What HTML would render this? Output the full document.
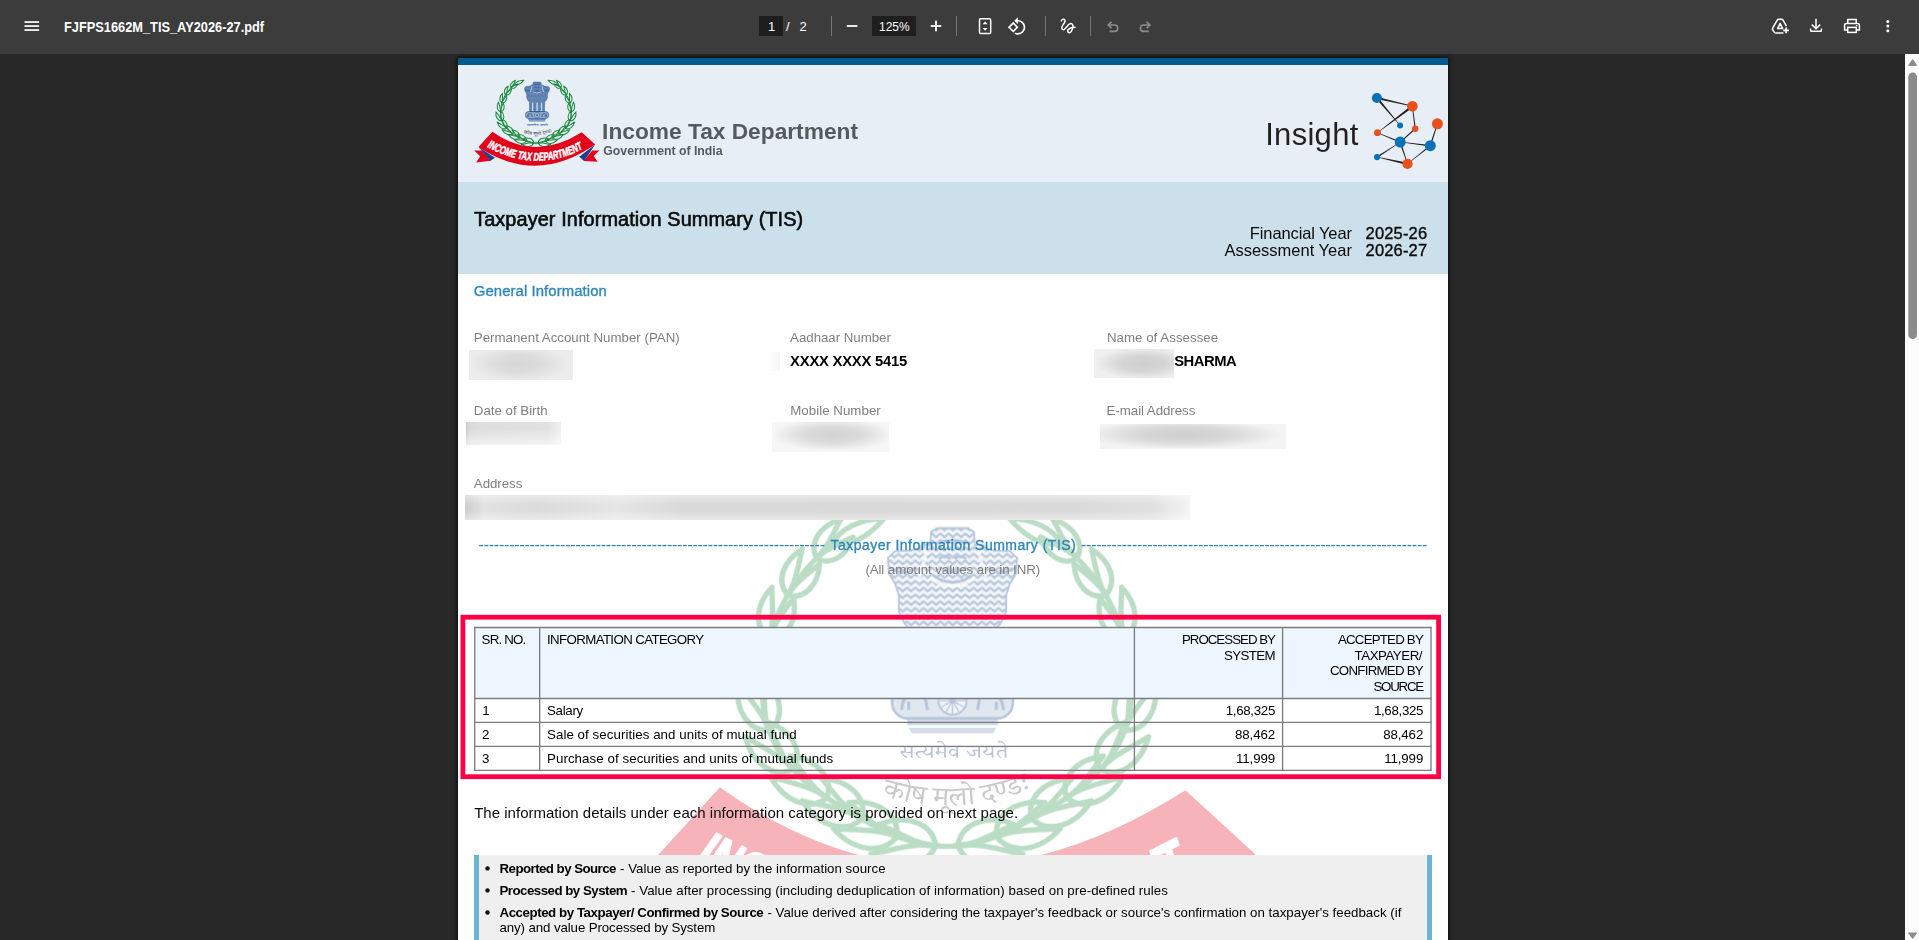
<!DOCTYPE html>
<html lang="en">
<head>
<meta charset="utf-8">
<title>FJFPS1662M_TIS_AY2026-27.pdf</title>
<style>
*{box-sizing:border-box;margin:0;padding:0}
html,body{width:1919px;height:940px;overflow:hidden;background:#282828;font-family:"Liberation Sans",sans-serif;}
body{position:relative}
.abs{position:absolute}
.t{position:absolute;white-space:nowrap;line-height:1;transform-origin:0 0}
#toolbar{position:absolute;left:0;top:0;width:1919px;height:54px;background:#3c3c3c;z-index:5;color:#fff}
#page{position:absolute;left:458px;top:58px;width:990px;height:882px;background:#fff;overflow:hidden}
#pshadow{position:absolute;left:458px;top:58px;width:990px;height:900px;box-shadow:0 0 4px 1px rgba(0,0,0,.75)}
#sb{position:absolute;left:1905px;top:54px;width:14px;height:886px;background:#fcfcfc;z-index:4}
.m{-webkit-text-stroke:.35px currentColor}
.b{font-weight:bold}
.g{color:#808080}
.bl{color:#2f87b7}
</style>
</head>
<body>
<div id="toolbar">
<svg class="abs" style="left:0;top:0" width="1919" height="54" viewBox="0 0 1919 54">
<!-- hamburger -->
<g fill="#fff"><rect x="24.5" y="21.2" width="14.6" height="1.7"/><rect x="24.5" y="25.2" width="14.6" height="1.7"/><rect x="24.5" y="29.2" width="14.6" height="1.7"/></g>
<!-- page / zoom boxes -->
<rect x="759" y="16" width="24" height="20" fill="#1e1e1e"/>
<rect x="872" y="16" width="44" height="20" fill="#1e1e1e"/>
<!-- separators -->
<g fill="#757575"><rect x="831" y="16" width="1" height="20"/><rect x="956" y="16" width="1" height="20"/><rect x="1045" y="16" width="1" height="20"/><rect x="1090" y="16" width="1" height="20"/></g>
<!-- minus / plus -->
<rect x="846.8" y="25.1" width="10.6" height="1.8" fill="#fff"/>
<rect x="930.7" y="25.1" width="10.6" height="1.8" fill="#fff"/><rect x="935.1" y="20.7" width="1.8" height="10.6" fill="#fff"/>
<!-- fit to page -->
<rect x="979.5" y="18.7" width="11.2" height="14.8" rx="1.2" fill="none" stroke="#fff" stroke-width="1.5"/>
<path d="M982.6 24.2 L985.1 21.4 L987.6 24.2 Z M982.6 28 L985.1 30.8 L987.6 28 Z" fill="#fff"/>
<!-- rotate ccw -->
<g transform="translate(1007.2 16.6) scale(0.82)" fill="#fff"><path d="M7.34 6.41L.86 12.9l6.49 6.48 6.49-6.48-6.5-6.49zM3.69 12.9l3.66-3.66L11 12.9l-3.66 3.66-3.65-3.66zm15.67-6.26C17.61 4.88 15.3 4 13 4V.76L8.76 5 13 9.24V6c1.79 0 3.58.68 4.95 2.05 2.73 2.73 2.73 7.17 0 9.9C16.58 19.32 14.79 20 13 20c-.97 0-1.94-.21-2.84-.61l-1.49 1.49C10.02 21.62 11.51 22 13 22c2.3 0 4.61-.88 6.36-2.64 3.52-3.51 3.52-9.21 0-12.72z"/></g>
<!-- draw -->
<path d="M1061.2,20.9 C1061.8,19.2 1064.6,18.5 1065.1,20.6 C1065.6,22.6 1061.6,25.6 1061.8,27.6 C1062,29.9 1063.6,30.1 1064.6,29.2 C1066.4,27.8 1068.4,23.8 1070.4,23.6 C1072.6,23.4 1073.4,25.6 1072.8,27.6 C1072.2,29.8 1071,32.6 1069.4,32.7 C1067.6,32.8 1067.2,30.6 1068.4,29.4 C1069.8,28 1072.4,27.2 1075,27.2" fill="none" stroke="#fff" stroke-width="1.5" stroke-linecap="round" stroke-linejoin="round"/>
<!-- undo / redo -->
<g fill="none" stroke="#8c8c8c" stroke-width="1.6" stroke-linejoin="miter">
<path d="M1111.6 21.8 L1108.2 25 L1111.6 28.2 M1108.4 25 H1114.6 A3.2 3.2 0 0 1 1114.6 31.4 H1109.4"/>
<path d="M1146.6 21.8 L1150 25 L1146.6 28.2 M1149.8 25 H1143.6 A3.2 3.2 0 0 0 1143.6 31.4 H1148.8"/>
</g>
<!-- drive add -->
<g fill="none" stroke="#fff" stroke-width="1.5" stroke-linejoin="round">
<path d="M1786.4 26.2 L1783.2 20.4 Q1782.6 19.3 1781.4 19.3 H1778.9 Q1777.7 19.3 1777.1 20.4 L1772.8 27.8 Q1772.2 28.9 1772.8 29.9 L1774 32 Q1774.6 33 1775.8 33 H1783.4"/>
<path d="M1780.1 23.4 L1782.6 28.6 H1777.6 Z"/>
</g>
<path d="M1786.1 27.4 V33.2 M1783.2 30.3 H1789" stroke="#fff" stroke-width="1.7" fill="none"/>
<!-- download -->
<path d="M1816 18.8 V28.6 M1811.8 24.6 L1816 28.8 L1820.2 24.6 M1810.6 28.6 V30.4 Q1810.6 31.3 1811.5 31.3 H1820.5 Q1821.4 31.3 1821.4 30.4 V28.6" fill="none" stroke="#fff" stroke-width="1.5"/>
<!-- print -->
<g fill="none" stroke="#fff" stroke-width="1.5">
<path d="M1847.8 23.2 V19.5 H1856.2 V23.2"/>
<path d="M1847.6 30 H1844.6 V25.2 Q1844.6 23.4 1846.4 23.4 H1857.6 Q1859.4 23.4 1859.4 25.2 V30 H1856.4"/>
<rect x="1847.7" y="27.4" width="8.6" height="5" />
</g>
<circle cx="1856.6" cy="25.8" r="0.8" fill="#fff"/>
<!-- more -->
<g fill="#fff"><circle cx="1887.8" cy="21.4" r="1.5"/><circle cx="1887.8" cy="26" r="1.5"/><circle cx="1887.8" cy="30.7" r="1.5"/></g>
</svg>
<div class="t" id="ttl" style="left:64px;top:20px;font-size:14px;font-weight:bold;transform:scaleX(.914)">FJFPS1662M_TIS_AY2026-27.pdf</div>
<div class="t" id="pg1" style="left:768px;top:20px;font-size:13px">1</div>
<div class="t" id="pgs" style="left:786px;top:20px;font-size:13px">/</div>
<div class="t" id="pg2" style="left:799.5px;top:20px;font-size:13px">2</div>
<div class="t" id="zm" style="left:878.5px;top:20px;font-size:13px;transform:scaleX(.92)">125%</div>

</div>
<div id="pshadow"></div>
<div id="page">
<div class="abs" style="left:0;top:0;width:990px;height:7px;background:#005b8c"></div>
<div class="abs" style="left:0;top:7px;width:990px;height:117px;background:#e7eef6"></div>
<div class="abs" style="left:0;top:124px;width:990px;height:92px;background:#cce0eb"></div>
<svg class="abs" style="left:0;top:0" width="990" height="882" viewBox="0 0 990 882">
<defs>
<g id="itd">
<g transform="translate(-0.35,1.5)"><g id="br" fill="none" stroke="#1d8b3f" stroke-width="1.02" stroke-linejoin="round">
<path d="M5.28,29.94 L3.70,30.13 L2.11,30.24 L0.53,30.26 L-1.05,30.20 L-2.63,30.06 L-4.19,29.84 L-5.74,29.53 L-7.27,29.15 L-8.77,28.68 L-10.24,28.14 L-11.68,27.53 L-13.09,26.84 L-14.45,26.08 L-15.80,25.29 L-17.16,24.50 L-18.52,23.71 L-19.90,22.89 L-21.29,22.05 L-22.69,21.16 L-24.08,20.21 L-25.47,19.19 L-26.83,18.10 L-28.15,16.91 L-29.41,15.64 L-30.60,14.27 L-31.69,12.80 L-32.67,11.25 L-33.51,9.61 L-34.21,7.90 L-34.75,6.13 L-35.12,4.31 L-35.31,2.47 L-35.39,0.62 L-35.38,-1.24 L-35.27,-3.09 L-35.06,-4.93 L-34.75,-6.75 L-34.35,-8.56 L-33.85,-10.35 L-33.27,-12.11 L-32.59,-13.83 L-31.82,-15.52 L-30.96,-17.16 L-30.02,-18.76 L-29.00,-20.30 L-27.90,-21.79 L-26.72,-23.22 L-25.46,-24.59 L-24.14,-25.89 L-22.75,-27.12 L-21.30,-28.27" fill="none" stroke-width="1.0"/>
<path transform="translate(-2.11,30.12) rotate(172.6)" d="M0,0 C2.27,-3.82 7.81,-4.08 12.60,0 C9.07,0.13 3.78,1.15 0,0Z"/>
<path transform="translate(-2.11,30.12) rotate(-159.4)" d="M0,0 C2.09,3.68 7.19,3.92 11.60,0 C8.35,-0.12 3.48,-1.10 0,0Z"/>
<path transform="translate(-9.54,28.41) rotate(-172.8)" d="M0,0 C2.22,-3.74 7.64,-3.99 12.33,0 C8.88,0.12 3.70,1.12 0,0Z"/>
<path transform="translate(-9.54,28.41) rotate(-144.8)" d="M0,0 C2.04,3.60 7.04,3.84 11.35,0 C8.17,-0.12 3.41,-1.08 0,0Z"/>
<path transform="translate(-16.30,25.00) rotate(-163.0)" d="M0,0 C2.16,-3.64 7.43,-3.88 11.98,0 C8.62,0.12 3.59,1.09 0,0Z"/>
<path transform="translate(-16.30,25.00) rotate(-135.0)" d="M0,0 C1.98,3.49 6.84,3.73 11.03,0 C7.94,-0.12 3.31,-1.05 0,0Z"/>
<path transform="translate(-23.00,20.95) rotate(-159.3)" d="M0,0 C2.09,-3.52 7.18,-3.75 11.59,0 C8.34,0.12 3.48,1.06 0,0Z"/>
<path transform="translate(-23.00,20.95) rotate(-131.3)" d="M0,0 C1.92,3.38 6.61,3.61 10.67,0 C7.68,-0.11 3.20,-1.01 0,0Z"/>
<path transform="translate(-29.50,15.54) rotate(-145.6)" d="M0,0 C2.01,-3.39 6.93,-3.62 11.17,0 C8.04,0.11 3.35,1.02 0,0Z"/>
<path transform="translate(-29.50,15.54) rotate(-117.6)" d="M0,0 C1.85,3.26 6.38,3.48 10.28,0 C7.41,-0.11 3.09,-0.98 0,0Z"/>
<path transform="translate(-34.17,8.03) rotate(-123.0)" d="M0,0 C1.93,-3.26 6.65,-3.48 10.73,0 C7.73,0.11 3.22,0.98 0,0Z"/>
<path transform="translate(-34.17,8.03) rotate(-95.0)" d="M0,0 C1.78,3.13 6.13,3.34 9.88,0 C7.11,-0.10 2.96,-0.94 0,0Z"/>
<path transform="translate(-35.39,-0.82) rotate(-101.7)" d="M0,0 C1.85,-3.12 6.37,-3.33 10.28,0 C7.40,0.10 3.08,0.94 0,0Z"/>
<path transform="translate(-35.39,-0.82) rotate(-73.7)" d="M0,0 C1.70,3.00 5.87,3.20 9.46,0 C6.81,-0.10 2.84,-0.90 0,0Z"/>
<path transform="translate(-34.05,-9.69) rotate(-87.1)" d="M0,0 C1.76,-2.98 6.08,-3.17 9.80,0 C7.06,0.10 2.94,0.89 0,0Z"/>
<path transform="translate(-34.05,-9.69) rotate(-59.1)" d="M0,0 C1.62,2.86 5.60,3.05 9.03,0 C6.50,-0.10 2.71,-0.86 0,0Z"/>
<path transform="translate(-30.52,-17.94) rotate(-72.6)" d="M0,0 C1.68,-2.83 5.78,-3.02 9.32,0 C6.71,0.09 2.80,0.85 0,0Z"/>
<path transform="translate(-30.52,-17.94) rotate(-44.6)" d="M0,0 C1.54,2.72 5.32,2.90 8.58,0 C6.18,-0.09 2.57,-0.82 0,0Z"/>
<path transform="translate(-25.03,-25.03) rotate(-58.0)" d="M0,0 C1.59,-2.68 5.47,-2.86 8.82,0 C6.35,0.09 2.65,0.80 0,0Z"/>
<path transform="translate(-25.03,-25.03) rotate(-30.0)" d="M0,0 C1.46,2.57 5.03,2.74 8.12,0 C5.85,-0.09 2.44,-0.77 0,0Z"/>
<path transform="translate(-21.79,-27.90) rotate(-26.0)" d="M0,0 C2.38,-2.00 6.70,-1.90 10.80,0 C6.70,1.90 2.38,2.00 0,0Z"/>
</g></g>
<g transform="translate(-0.35,1.5) scale(-1,1)"><use href="#br"/></g>
<pattern id="fur" width="1.6" height="1.3" patternUnits="userSpaceOnUse"><path d="M-0.1,0.25 L0.8,1.0 L1.7,0.25" fill="none" stroke="#0f4186" stroke-width="0.44"/></pattern>
<path d="M3.75,-29.30 L4.85,-28.60 L5.05,-26.00 L6.35,-26.20 L7.65,-25.20 L9.35,-25.00 L11.75,-24.90 L13.15,-23.60 L12.95,-20.60 L11.75,-18.60 L11.05,-16.50 L11.05,-13.30 L9.95,-11.00 L8.35,-9.20 L8.15,0.30 L-6.65,0.30 L-6.85,-9.20 L-8.45,-11.00 L-9.55,-13.30 L-9.55,-16.50 L-10.25,-18.60 L-11.45,-20.60 L-11.65,-23.60 L-10.25,-24.90 L-7.85,-25.00 L-6.15,-25.20 L-4.85,-26.20 L-3.55,-26.00 L-3.35,-28.60 L-2.25,-29.30Z" fill="#0f4186" style="opacity:var(--eo,.5)"/>
<path d="M3.75,-29.30 L4.85,-28.60 L5.05,-26.00 L6.35,-26.20 L7.65,-25.20 L9.35,-25.00 L11.75,-24.90 L13.15,-23.60 L12.95,-20.60 L11.75,-18.60 L11.05,-16.50 L11.05,-13.30 L9.95,-11.00 L8.35,-9.20 L8.15,0.30 L-6.65,0.30 L-6.85,-9.20 L-8.45,-11.00 L-9.55,-13.30 L-9.55,-16.50 L-10.25,-18.60 L-11.45,-20.60 L-11.65,-23.60 L-10.25,-24.90 L-7.85,-25.00 L-6.15,-25.20 L-4.85,-26.20 L-3.55,-26.00 L-3.35,-28.60 L-2.25,-29.30Z" fill="url(#fur)" stroke="#0f4186" stroke-width=".35" stroke-linejoin="round"/>
<g fill="none" stroke="#0f4186" stroke-width=".5">
<path d="M-2.85,-20.2 Q0.75,-17.6 4.35,-20.2 M-2.25,-26.4 Q0.75,-27.6 3.75,-26.4 M-1.85,-23.4 q1.1,-1 2.2,0 M1.15,-23.4 q1.1,-1 2.2,0 M-1.05,-21.4 Q0.75,-20.4 2.55,-21.4"/>
<path d="M-10.85,-21.6 q2.2,1.6 4.4,0 M7.95,-21.6 q2.2,1.6 4.4,0"/>
</g>
<path d="M-4.25,-25.4 Q-4.65,-22.5 -5.85,-19.2 M5.75,-25.4 Q6.15,-22.5 7.35,-19.2 M-3.45,-19.6 Q0.75,-17 4.95,-19.6" fill="none" stroke="#fff" stroke-width=".7" opacity=".7"/>
<g fill="#e7eef6" opacity=".8"><rect x="-4.35" y="-8.6" width="1.3" height="8.6"/><rect x="0.10" y="-8.6" width="1.3" height="8.6"/><rect x="4.55" y="-8.6" width="1.3" height="8.6"/></g>
<rect x="-10.85" y="0.2" width="23.2" height="7.0" rx="3" fill="#0f4186" opacity=".42"/>
<rect x="-10.85" y="0.2" width="23.2" height="7.0" rx="3" fill="none" stroke="#0f4186" stroke-width=".5"/>
<circle cx="0.75" cy="3.8" r="2.7" fill="#fff" opacity=".55"/>
<g fill="none" stroke="#0f4186" stroke-width=".38"><circle cx="0.75" cy="3.8" r="2.7"/><path d="M0.75,3.8 L3.25,3.80 M0.75,3.8 L2.92,5.05 M0.75,3.8 L2.00,5.97 M0.75,3.8 L0.75,6.30 M0.75,3.8 L-0.50,5.97 M0.75,3.8 L-1.42,5.05 M0.75,3.8 L-1.75,3.80 M0.75,3.8 L-1.42,2.55 M0.75,3.8 L-0.50,1.63 M0.75,3.8 L0.75,1.30 M0.75,3.8 L2.00,1.63 M0.75,3.8 L2.92,2.55 " stroke-width=".25"/>
<path d="M-9.05,5.6 q0.4,-3 2,-3.2 q2,-0.4 2.6,1 l0.4,2.2 M-7.65,5.6 v-1.6 M5.55,5.6 l0.4,-2.2 q0.6,-1.4 2.6,-1 q1.6,0.2 2,3.2 M9.15,5.6 v-1.6" stroke-width=".6"/></g>
<rect x="-7.95" y="7.5" width="17.4" height="1.0" fill="#0f4186" opacity=".75"/>
<path d="M-7.65,9.0 h16.8 l-0.6,1.1 h-15.6z" fill="#0f4186" opacity=".6"/>
<text x="0.98" y="14.76" font-family='"Liberation Serif","Noto Serif Devanagari","Noto Sans Devanagari","Lohit Devanagari",serif' font-size="3.7" fill="#0f4186" text-anchor="middle" textLength="21" lengthAdjust="spacingAndGlyphs">सत्यमेव जयते</text>
<path id="mot" d="M-12.8,22.0 Q1.4,26.6 15.7,20.8" fill="none"/>
<text font-family='"Liberation Serif","Noto Serif Devanagari","Noto Sans Devanagari","Lohit Devanagari",serif' font-size="5.2" fill="#4d4d4d"><textPath href="#mot" textLength="29.2" lengthAdjust="spacingAndGlyphs">कोष मूलो दण्डः</textPath></text>
<path d="M-62.10,39.32 L-54.51,39.32 L-45.35,49.37 L-60.09,51.16 L-56.18,44.90Z" fill="#e2001a"/>
<path d="M63.11,39.09 L55.85,39.09 L47.36,49.70 L61.32,50.49 L57.41,44.68Z" fill="#e2001a"/>
<path d="M-57.86,35.74 L-41.33,46.46 L-45.79,49.48Z" fill="#1f3f8f"/>
<path d="M58.86,33.28 L42.89,45.35 L47.81,49.82Z" fill="#1f3f8f"/>
<path d="M-43.90,20.44 Q-1.45,50.77 45.46,21.00 L58.86,33.28 Q-0.06,74.28 -57.86,35.74Z" fill="#e2001a"/>
<path id="rbt" d="M-49.26,35.74 Q0.22,62.55 47.47,37.08" fill="none"/>
<text font-family='"Liberation Sans",sans-serif' font-weight="bold" font-style="italic" font-size="11.4" fill="#fff" stroke="#fff" stroke-width=".5" stroke-linejoin="round"><textPath href="#rbt" textLength="100.5" lengthAdjust="spacingAndGlyphs">INCOME TAX DEPARTMENT</textPath></text>
</g>
</defs>
<use href="#itd" transform="translate(78.30,53.30)"/>
<use href="#itd" transform="translate(490.60,622.80) scale(5.21)" opacity="0.3" style="--eo:.14"/>
<g fill="#231f20"><polygon points="918.65,41.07 954.31,48.59 954.49,47.81 919.15,38.93"/><polygon points="918.06,40.71 941.91,67.56 942.29,67.24 919.74,39.29"/><polygon points="953.67,47.24 919.38,74.54 919.62,74.86 955.13,49.16"/><polygon points="954.00,48.25 956.60,70.87 957.80,70.73 954.80,48.15"/><polygon points="956.77,70.31 941.90,83.76 942.50,84.44 957.63,71.29"/><polygon points="919.39,74.98 941.93,84.75 942.47,83.45 919.61,74.42"/><polygon points="942.17,84.35 972.22,88.40 972.38,87.00 942.23,83.85"/><polygon points="919.54,99.77 942.31,84.27 942.09,83.93 918.66,98.43"/><polygon points="941.49,84.34 949.22,106.00 949.78,105.80 942.91,83.86"/><polygon points="919.05,99.34 949.24,107.07 949.76,104.73 919.15,98.86"/><polygon points="971.86,87.15 949.38,105.74 949.62,106.06 972.74,88.25"/><polygon points="978.97,65.66 971.68,87.50 972.92,87.90 979.83,65.94"/></g><circle cx="918.90" cy="40.00" r="5.0" fill="#0771b8"/><circle cx="954.40" cy="48.20" r="5.3" fill="#e9501b"/><circle cx="979.40" cy="65.80" r="5.5" fill="#e9501b"/><circle cx="942.10" cy="67.40" r="3.0" fill="#0771b8"/><circle cx="957.20" cy="70.80" r="3.2" fill="#e9501b"/><circle cx="919.50" cy="74.70" r="3.4" fill="#e9501b"/><circle cx="942.20" cy="84.10" r="5.5" fill="#0771b8"/><circle cx="972.30" cy="87.70" r="5.5" fill="#0771b8"/><circle cx="919.10" cy="99.10" r="3.1" fill="#0771b8"/><circle cx="949.50" cy="105.90" r="5.1" fill="#e9501b"/>
</svg>
<div class="abs" style="left:11.2px;top:292.3px;width:103.7px;height:29.3px;background:radial-gradient(ellipse 48% 60% at 48% 45%,#d6d6d6 0%,#dcdcdc 45%,#ececec 100%)"></div>
<div class="abs" style="left:309.4px;top:294px;width:12.6px;height:19px;background:linear-gradient(90deg,#fff,#f6f6f6)"></div>
<div class="abs" style="left:636.2px;top:291.3px;width:79.7px;height:28.5px;background:radial-gradient(ellipse 60% 55% at 62% 50%,#cfcfcf 0%,#d4d4d4 45%,#efefef 100%)"></div>
<div class="abs" style="left:8px;top:364.1px;width:94.9px;height:23.3px;background:linear-gradient(180deg,rgba(255,255,255,0) 35%,rgba(255,255,255,.6) 100%),linear-gradient(90deg,#c6c6c6 0,#d9d9d9 3%,#dedede 14%,#e0e0e0 50%,#e1e1e1 85%,#efefef 100%)"></div>
<div class="abs" style="left:313.9px;top:364.1px;width:116.9px;height:29.5px;background:radial-gradient(ellipse 52% 55% at 52% 42%,#d4d4d4 0%,#dadada 45%,#f6f6f6 100%)"></div>
<div class="abs" style="left:641.9px;top:365.8px;width:185.9px;height:25.6px;background:radial-gradient(ellipse 52% 60% at 45% 42%,#d0d0d0 0%,#d8d8d8 50%,#f3f3f3 100%)"></div>
<div class="abs" style="left:6.8px;top:437px;width:725.0px;height:24.5px;background:linear-gradient(180deg,rgba(255,255,255,.4),rgba(255,255,255,0) 38%,rgba(255,255,255,0) 62%,rgba(255,255,255,.4)),linear-gradient(90deg,#cdcdcd 0,#e2e2e2 2.5%,#dbdbdb 10%,#e5e5e5 21%,#d9d9d9 30%,#d8d8d8 55%,#dadada 85%,#e0e0e0 95%,#f4f4f4 100%)"></div>
<div class="t bl" style="left:20.6px;top:479.00px;font-size:16px;letter-spacing:-0.238px">--------------------------------------------------------------------</div>
<div class="t bl" style="left:623.0px;top:479.00px;font-size:16px;letter-spacing:-0.238px">--------------------------------------------------------------------</div>
<div class="abs" style="left:16.75px;top:569.5px;width:956.25px;height:70.95px;background:#eef6ff"></div>
<svg class="abs" style="left:0;top:0" width="990" height="882" viewBox="0 0 990 882">
<g stroke="#7d7d7d" stroke-width="1.35"><line x1="16.75" y1="568.83" x2="16.75" y2="712.97"/><line x1="81.65" y1="568.83" x2="81.65" y2="712.97"/><line x1="676.4" y1="568.83" x2="676.4" y2="712.97"/><line x1="824.6" y1="568.83" x2="824.6" y2="712.97"/><line x1="973.0" y1="568.83" x2="973.0" y2="712.97"/><line x1="16.08" y1="569.5" x2="973.67" y2="569.5"/><line x1="16.08" y1="640.45" x2="973.67" y2="640.45"/><line x1="16.08" y1="664.4" x2="973.67" y2="664.4"/><line x1="16.08" y1="688.3" x2="973.67" y2="688.3"/><line x1="16.08" y1="712.3" x2="973.67" y2="712.3"/></g>
<rect x="4.9" y="559.2" width="975.7" height="159.5" fill="none" stroke="#ff0046" stroke-width="4.8"/>
</svg>
<div class="t b" style="left:144.1px;top:62.00px;font-size:22.72px;color:#555a5f;">Income Tax Department</div>
<div class="t b" style="left:145.3px;top:87.00px;font-size:12.28px;color:#555a5f;">Government of India</div>
<div class="t" style="left:807.2px;top:61.00px;font-size:31px;letter-spacing:0.294px;color:#231f20;">Insight</div>
<div class="t m" style="left:16.1px;top:152.00px;font-size:19.9px;letter-spacing:0.092px;color:#0a0a0a;-webkit-text-stroke-width:.6px;">Taxpayer Information Summary (TIS)</div>
<div class="t" style="left:791.8px;top:167.00px;font-size:16.5px;letter-spacing:-0.112px;color:#0a0a0a;">Financial Year</div>
<div class="t m" style="left:907.6px;top:167.00px;font-size:16.5px;letter-spacing:0.163px;color:#0a0a0a;">2025-26</div>
<div class="t" style="left:766.4px;top:184.00px;font-size:16.5px;color:#0a0a0a;">Assessment Year</div>
<div class="t m" style="left:907.6px;top:184.00px;font-size:16.5px;letter-spacing:0.163px;color:#0a0a0a;">2026-27</div>
<div class="t m bl" style="left:15.8px;top:226.00px;font-size:14.9px;letter-spacing:0.078px;">General Information</div>
<div class="t g" style="left:15.8px;top:273.00px;font-size:13.3px;letter-spacing:-0.002px;">Permanent Account Number (PAN)</div>
<div class="t g" style="left:332.1px;top:273.00px;font-size:13.3px;letter-spacing:-0.04px;">Aadhaar Number</div>
<div class="t g" style="left:648.9px;top:273.00px;font-size:13.3px;letter-spacing:0.027px;">Name of Assessee</div>
<div class="t g" style="left:15.8px;top:346.00px;font-size:13.3px;letter-spacing:-0.008px;">Date of Birth</div>
<div class="t g" style="left:332.2px;top:346.00px;font-size:13.3px;letter-spacing:0.033px;">Mobile Number</div>
<div class="t g" style="left:648.6px;top:346.00px;font-size:13.3px;letter-spacing:-0.052px;">E-mail Address</div>
<div class="t g" style="left:15.8px;top:419.00px;font-size:13.3px;letter-spacing:-0.04px;">Address</div>
<div class="t b" style="left:332.1px;top:296.00px;font-size:14.8px;letter-spacing:-0.222px;color:#000;">XXXX XXXX 5415</div>
<div class="t b" style="left:716.2px;top:296.00px;font-size:14.8px;letter-spacing:-0.476px;color:#000;">SHARMA</div>
<div class="t m bl" style="left:372.5px;top:480.00px;font-size:14px;letter-spacing:0.476px;">Taxpayer Information Summary (TIS)</div>
<div class="t g" style="left:407.4px;top:505.00px;font-size:13.3px;letter-spacing:-0.089px;">(All amount values are in INR)</div>
<div class="t" style="left:23.6px;top:575.00px;font-size:13.3px;letter-spacing:-0.814px;color:#000;">SR. NO.</div>
<div class="t" style="left:89.0px;top:575.00px;font-size:13.3px;letter-spacing:-0.634px;color:#000;">INFORMATION CATEGORY</div>
<div class="t" style="left:723.9px;top:575.00px;font-size:13.3px;letter-spacing:-0.986px;color:#000;">PROCESSED BY</div>
<div class="t" style="left:766.0px;top:591.00px;font-size:13.3px;letter-spacing:-0.615px;color:#000;">SYSTEM</div>
<div class="t" style="left:880.0px;top:575.00px;font-size:13.3px;letter-spacing:-0.804px;color:#000;">ACCEPTED BY</div>
<div class="t" style="left:896.6px;top:591.00px;font-size:13.3px;letter-spacing:-0.475px;color:#000;">TAXPAYER/</div>
<div class="t" style="left:872.0px;top:606.00px;font-size:13.3px;letter-spacing:-0.746px;color:#000;">CONFIRMED BY</div>
<div class="t" style="left:915.4px;top:622.00px;font-size:13.3px;letter-spacing:-1.215px;color:#000;">SOURCE</div>
<div class="t" style="left:24.3px;top:646.00px;font-size:13.3px;color:#000;">1</div>
<div class="t" style="left:89.0px;top:646.00px;font-size:13.3px;letter-spacing:-0.284px;color:#000;">Salary</div>
<div class="t" style="left:767.7px;top:646.00px;font-size:13.3px;letter-spacing:-0.308px;color:#000;">1,68,325</div>
<div class="t" style="left:915.9px;top:646.00px;font-size:13.3px;letter-spacing:-0.308px;color:#000;">1,68,325</div>
<div class="t" style="left:24.0px;top:670.00px;font-size:13.3px;color:#000;">2</div>
<div class="t" style="left:89.0px;top:670.00px;font-size:13.3px;letter-spacing:0.063px;color:#000;">Sale of securities and units of mutual fund</div>
<div class="t" style="left:777.0px;top:670.00px;font-size:13.3px;letter-spacing:-0.112px;color:#000;">88,462</div>
<div class="t" style="left:925.2px;top:670.00px;font-size:13.3px;letter-spacing:-0.112px;color:#000;">88,462</div>
<div class="t" style="left:24.0px;top:694.00px;font-size:13.3px;color:#000;">3</div>
<div class="t" style="left:89.0px;top:694.00px;font-size:13.3px;letter-spacing:0.067px;color:#000;">Purchase of securities and units of mutual funds</div>
<div class="t" style="left:778.0px;top:694.00px;font-size:13.3px;letter-spacing:-0.115px;color:#000;">11,999</div>
<div class="t" style="left:926.2px;top:694.00px;font-size:13.3px;letter-spacing:-0.115px;color:#000;">11,999</div>
<div class="t" style="left:16.2px;top:747.00px;font-size:15px;letter-spacing:0.014px;color:#0a0a0a;">The information details under each information category is provided on next page.</div>
<div class="abs" style="left:15.8px;top:797.2px;width:958.7px;height:90px;background:#efefef;border-left:5.2px solid #6bb5d3;border-right:5px solid #6bb5d3"></div>
<svg class="abs" style="left:0;top:0" width="990" height="882"><g fill="#111"><circle cx="29.5" cy="810.4" r="2.2"/><circle cx="29.5" cy="832.4" r="2.2"/><circle cx="29.5" cy="854.5" r="2.2"/></g></svg>
<div class="t" style="left:41.5px;top:804.00px;font-size:13.3px;letter-spacing:-0.553px;color:#000;"><b>Reported by Source</b></div>
<div class="t" style="left:162.0px;top:804.00px;font-size:13.3px;letter-spacing:0.011px;color:#000;">- Value as reported by the information source</div>
<div class="t" style="left:41.5px;top:826.00px;font-size:13.3px;letter-spacing:-0.52px;color:#000;"><b>Processed by System</b></div>
<div class="t" style="left:173.0px;top:826.00px;font-size:13.3px;letter-spacing:0.046px;color:#000;">- Value after processing (including deduplication of information) based on pre-defined rules</div>
<div class="t" style="left:41.5px;top:848.00px;font-size:13.3px;letter-spacing:-0.445px;color:#000;"><b>Accepted by Taxpayer/ Confirmed by Source</b></div>
<div class="t" style="left:309.4px;top:848.00px;font-size:13.3px;letter-spacing:0.005px;color:#000;">- Value derived after considering the taxpayer's feedback or source's confirmation on taxpayer's feedback (if</div>
<div class="t" style="left:41.5px;top:863.00px;font-size:13.3px;letter-spacing:-0.112px;color:#000;">any) and value Processed by System</div>
</div>
<div id="sb">
<svg class="abs" style="left:0;top:0" width="14" height="886" viewBox="0 0 14 886">
<path d="M3.6 11.4 L7.6 5.6 L11.6 11.4 Z" fill="#8b8b8b" stroke="#8b8b8b" stroke-width="1" stroke-linejoin="round"/>
<rect x="3.3" y="18.5" width="8.7" height="266.5" rx="4.3" fill="#8b8b8b"/>
<path d="M3.6 879 L7.6 884.4 L11.6 879 Z" fill="#8b8b8b" stroke="#8b8b8b" stroke-width="1" stroke-linejoin="round"/>
</svg>

</div>
</body>
</html>
